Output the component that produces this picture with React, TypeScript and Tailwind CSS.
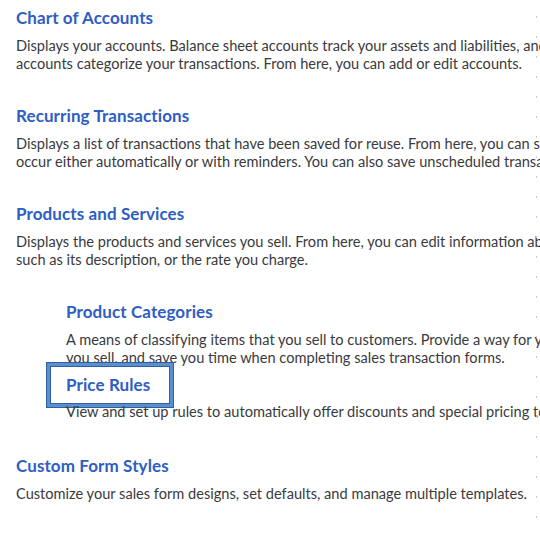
import React from 'react';

type Item = {
  title: string;
  lines: string[];
};

const items: Item[] = [
  {
    title: 'Chart of Accounts',
    lines: [
      'Displays your accounts. Balance sheet accounts track your assets and liabilities, and income and expense',
      'accounts categorize your transactions. From here, you can add or edit accounts.',
    ],
  },
  {
    title: 'Recurring Transactions',
    lines: [
      'Displays a list of transactions that have been saved for reuse. From here, you can schedule transactions to',
      'occur either automatically or with reminders. You can also save unscheduled transactions to use at any time.',
    ],
  },
  {
    title: 'Products and Services',
    lines: [
      'Displays the products and services you sell. From here, you can edit information about a product or service,',
      'such as its description, or the rate you charge.',
    ],
  },
];

const titleCls = 'text-[17px] font-bold leading-[20px] tracking-[0.1px] text-[#2e5dc4]';
const descCls = 'text-[14.6px] leading-[18px] text-[#393a3d]';

function Title({ text, focused }: { text: string; focused?: boolean }) {
  if (focused) {
    return (
      <div className="-ml-[19px] w-fit border-4 border-[#5b8fcd] py-[8px] pl-[15px] pr-[19px] outline outline-1 -outline-offset-4 outline-[#2f5f9e] ring-1 ring-[#2f5f9e]">
        <div className={titleCls}>{text}</div>
      </div>
    );
  }
  return <div className={titleCls}>{text}</div>;
}

function Desc({ lines }: { lines: string[] }) {
  return (
    <div className={`mt-[9px] ${descCls}`}>
      {lines.map((l) => (
        <div key={l} className="whitespace-nowrap">
          {l}
        </div>
      ))}
    </div>
  );
}

export default function App() {
  return (
    <div
      className="relative h-[534px] w-[540px] overflow-hidden bg-white"
      style={{ fontFamily: 'Lato, "Open Sans", sans-serif' }}
    >
      <div className="flex flex-col gap-[33px] pl-4 pt-[8px]">
        {items.map((it) => (
          <div key={it.title}>
            <Title text={it.title} />
            <Desc lines={it.lines} />
          </div>
        ))}

        <div className="flex flex-col pl-[50px]">
          <div>
            <Title text="Product Categories" />
            <Desc
              lines={[
                'A means of classifying items that you sell to customers. Provide a way for you to quickly organize what',
                'you sell, and save you time when completing sales transaction forms.',
              ]}
            />
          </div>
          <div className="-mt-[4px]">
            <Title text="Price Rules" focused />
            <div className={`-mt-[4px] whitespace-nowrap ${descCls}`}>
              View and set up rules to automatically offer discounts and special pricing to customers.
            </div>
          </div>
        </div>

        <div className="mt-[2px]">
          <Title text="Custom Form Styles" />
          <Desc lines={['Customize your sales form designs, set defaults, and manage multiple templates.']} />
        </div>
      </div>

      <div className="absolute right-[3px] top-0 h-full w-px bg-[repeating-linear-gradient(to_bottom,transparent_0px,transparent_16px,#c9c9c9_16px,#c9c9c9_18px,transparent_18px,transparent_20px)]" />
    </div>
  );
}
